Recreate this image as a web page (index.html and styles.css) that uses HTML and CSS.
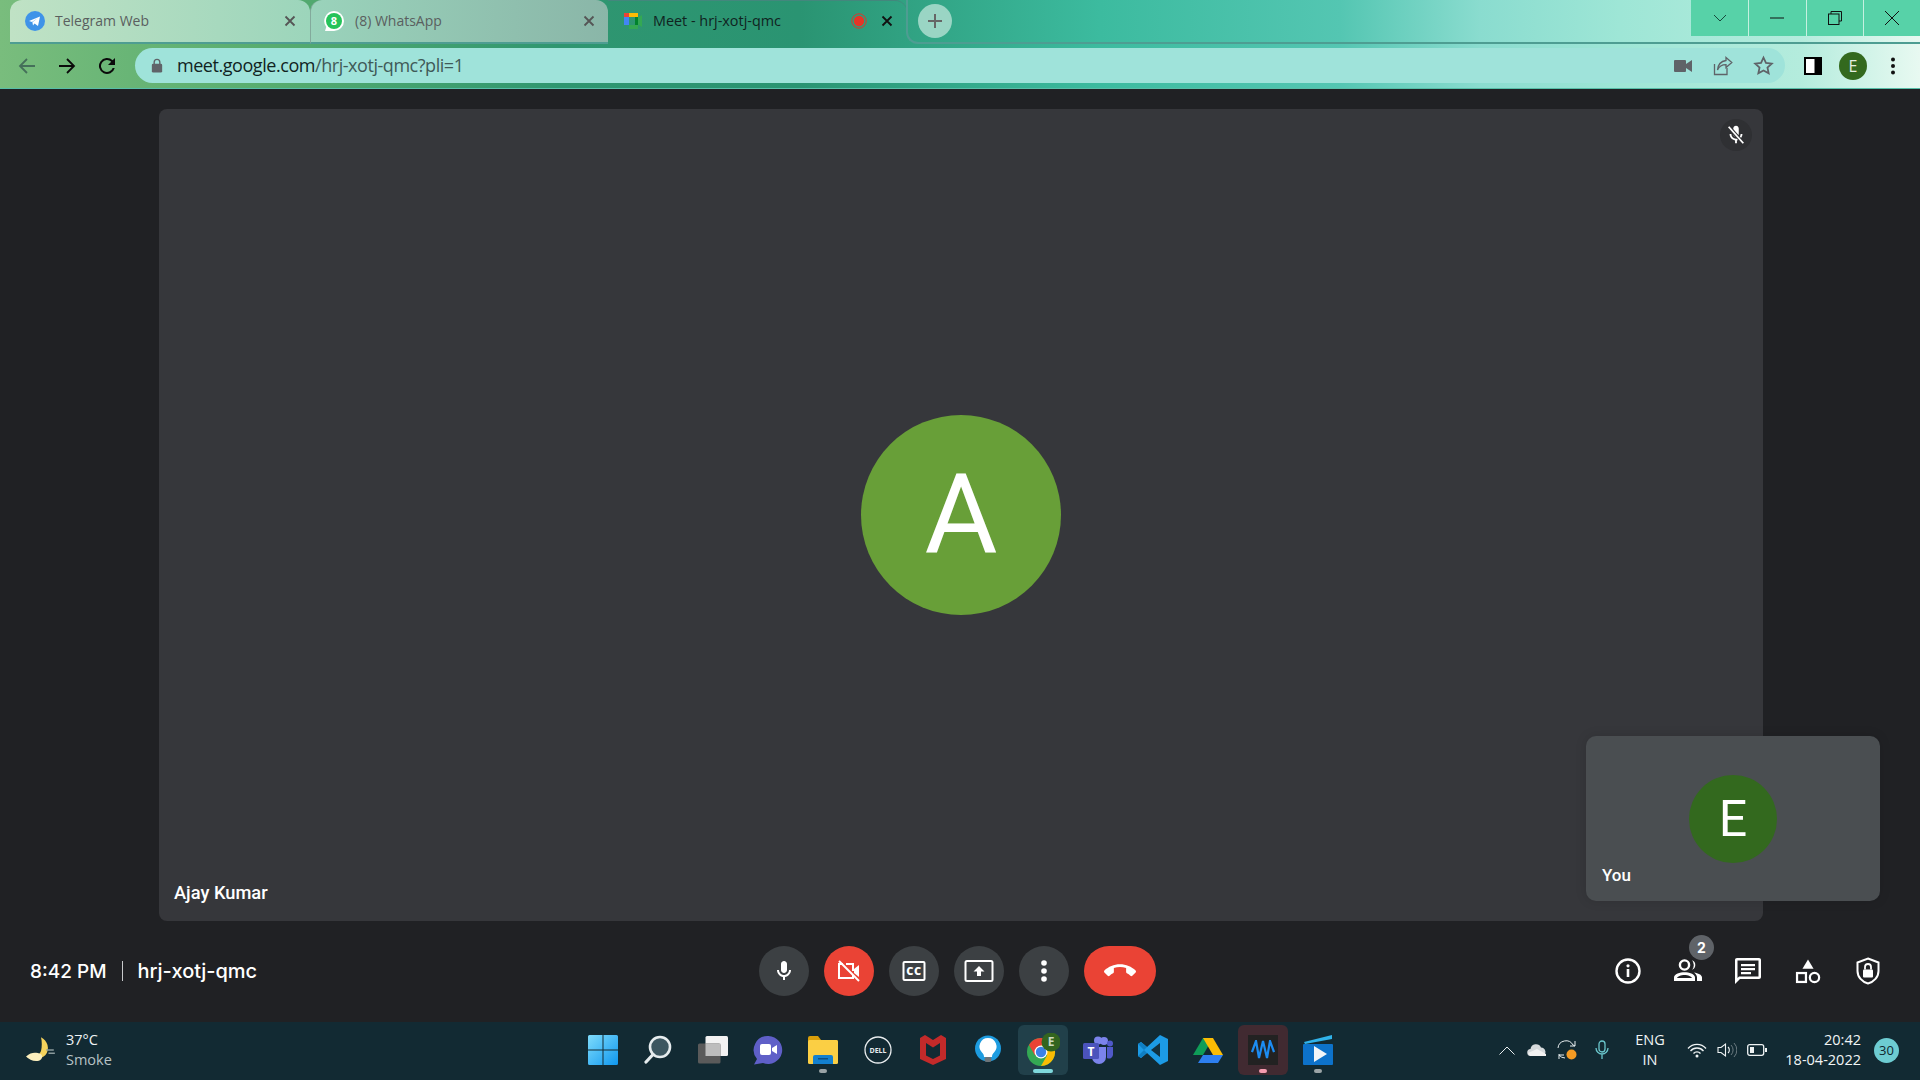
FILE: index.html
```html
<!DOCTYPE html>
<html lang="en">
<head>
<meta charset="utf-8">
<title>Meet - hrj-xotj-qmc</title>
<link rel="stylesheet" href="styles.css">
</head>
<body>
<header class="chrome">
  <div class="tabstrip">
    <div class="tab tab-one">
      <svg class="favicon" viewBox="0 0 20 20"><circle cx="10" cy="10" r="10" fill="#3f93e8"/><path d="M4 10l11-4.5-2 9.5-3.5-2.5-1.5 2-.6-3.3L13 7l-6 4z" fill="#fff"/></svg>
      <span class="tab-title">Telegram Web</span>
      <svg class="tab-x" viewBox="0 0 12 12"><path d="M1.5 1.5l9 9m0-9l-9 9" stroke="#555" stroke-width="1.8"/></svg>
    </div>
    <div class="tab tab-two">
      <svg class="favicon" viewBox="0 0 20 20"><path d="M10 0a10 10 0 0 1 0 20H1l1.3-4A10 10 0 0 1 10 0z" fill="#fff"/><circle cx="10" cy="10" r="8" fill="#25c35a"/><text x="10" y="14" class="wa-count">8</text></svg>
      <span class="tab-title">(8) WhatsApp</span>
      <svg class="tab-x" viewBox="0 0 12 12"><path d="M1.5 1.5l9 9m0-9l-9 9" stroke="#555" stroke-width="1.8"/></svg>
    </div>
    <div class="tab tab-active">
      <svg class="favicon" viewBox="0 0 20 20"><rect x="1" y="6" width="5" height="8" fill="#4285f4"/><rect x="6" y="2" width="9" height="4" fill="#fbbc04"/><rect x="1" y="2" width="5" height="4" fill="#ea4335"/><rect x="6" y="14" width="9" height="4" fill="#34a853"/><path d="M14 7l5-3v12l-5-3z" fill="#34a853"/><rect x="12" y="6" width="3" height="8" fill="#00832d"/></svg>
      <span class="tab-title">Meet - hrj-xotj-qmc</span>
      <svg class="rec" viewBox="0 0 16 16"><circle cx="8" cy="8" r="7.2" fill="none" stroke="#d8392b" stroke-width="1"/><circle cx="8" cy="8" r="5.2" fill="#e53526"/></svg>
      <svg class="tab-x" viewBox="0 0 12 12"><path d="M1.5 1.5l9 9m0-9l-9 9" stroke="#111" stroke-width="1.8"/></svg>
    </div>
    <div class="strip-rest">
      <div class="newtab"><svg viewBox="0 0 16 16" width="16" height="16"><path d="M8 1v14M1 8h14" stroke="#666" stroke-width="2"/></svg></div>
      <div class="winctl">
        <div class="winbtn"><svg viewBox="0 0 14 14" width="14" height="14"><path d="M1 4l6 6 6-6" fill="none" stroke="#17493c" stroke-width="1"/></svg></div>
        <div class="winbtn"><svg viewBox="0 0 14 14" width="14" height="14"><path d="M0 7h14" stroke="#111" stroke-width="1"/></svg></div>
        <div class="winbtn"><svg viewBox="0 0 14 14" width="14" height="14"><path d="M3 3V.5h10.500V10H11" fill="none" stroke="#111"/><rect x=".5" y="3" width="10.500" height="10.500" fill="none" stroke="#111"/></svg></div>
        <div class="winbtn"><svg viewBox="0 0 14 14" width="14" height="14"><path d="M0 0l14 14M14 0L0 14" stroke="#111" stroke-width="1"/></svg></div>
      </div>
    </div>
  </div>
  <div class="toolbar">
    <div class="cell"><svg viewBox="0 0 18 18" width="18" height="18"><path d="M17 9H2M9 2L2 9l7 7" fill="none" stroke="#45705a" stroke-width="1.800"/></svg></div>
    <div class="cell"><svg viewBox="0 0 18 18" width="18" height="18"><path d="M1 9h15M9 2l7 7-7 7" fill="none" stroke="#0b0b0b" stroke-width="1.800"/></svg></div>
    <div class="cell"><svg viewBox="0 0 24 24" width="24" height="24"><path d="M17.650 6.350A8 8 0 1 0 19.730 14h-2.080a6 6 0 1 1-1.410-6.240L13 11h7V4z" fill="#0b0b0b"/></svg></div>
    <div class="address">
      <svg class="lock" viewBox="0 0 12 16" width="12" height="15"><path d="M3 7V4.500a3 3 0 0 1 6 0V7" fill="none" stroke="#5f6368" stroke-width="1.500"/><rect x="0.500" y="6" width="11" height="9.500" rx="1.500" fill="#5f6368"/></svg>
      <span class="url">meet.google.com<span class="url-path">/hrj-xotj-qmc?pli=1</span></span>
      <div class="addr-icons">
        <div class="cell"><svg viewBox="0 0 18 14" width="18" height="14"><rect y="1" width="12" height="12" rx="1" fill="#5f6368"/><path d="M12 5l6-4v12l-6-4z" fill="#5f6368"/></svg></div>
        <div class="cell"><svg viewBox="0 0 20 20" width="20" height="20"><path d="M14 12v6.500H1.500V8" fill="none" stroke="#5f6368" stroke-width="1.300"/><path d="M13 1.500l5.800 5-5.800 5V8.700C8.500 8.700 6 10.500 4.500 14 5 8.500 8 5.200 13 4.500z" fill="none" stroke="#5f6368" stroke-width="1.300"/></svg></div>
        <div class="cell"><svg viewBox="0 0 24 24" width="21" height="21"><path d="M12 3l2.800 6 6.700.8-5 4.500 1.400 6.700L12 17.600 6.100 21l1.400-6.700-5-4.500 6.700-.8z" fill="none" stroke="#5f6368" stroke-width="2"/></svg></div>
      </div>
    </div>
    <div class="tool-right">
      <div class="cell"><svg viewBox="0 0 18 18" width="18" height="18"><rect width="18" height="18" fill="#000"/><rect x="2" y="2" width="8.500" height="14" fill="#fff"/></svg></div>
      <div class="cell"><div class="profile">E</div></div>
      <div class="cell"><svg viewBox="0 0 4 18" width="4" height="18"><circle cx="2" cy="2.500" r="2" fill="#111"/><circle cx="2" cy="9" r="2" fill="#111"/><circle cx="2" cy="15.500" r="2" fill="#111"/></svg></div>
    </div>
  </div>
</header>

<main class="meet">
  <section class="stage">
    <div class="tile">
      <div class="muted"><svg viewBox="0 0 24 24" width="22" height="22"><path d="M12 14c1.660 0 3-1.340 3-3V5c0-1.660-1.340-3-3-3S9 3.340 9 5v6c0 1.660 1.340 3 3 3zm5-3c0 2.760-2.240 5-5 5s-5-2.240-5-5H5c0 3.530 2.610 6.430 6 6.920V21h2v-3.080c3.390-.49 6-3.390 6-6.920h-2z" fill="#fff"/><path d="M4 3l16 18" stroke="#2f3033" stroke-width="4"/><path d="M4 3l16 18" stroke="#fff" stroke-width="2"/></svg></div>
      <div class="avatar-big">A</div>
      <div class="name">Ajay Kumar</div>
    </div>
    <div class="self">
      <div class="avatar-small">E</div>
      <div class="self-name">You</div>
    </div>
  </section>
  <section class="controls">
    <div class="meeting"><span class="clock-time">8:42 PM</span><i class="divider"></i><span>hrj-xotj-qmc</span></div>
    <div class="buttons">
      <div class="round"><svg viewBox="0 0 24 24" width="24" height="24"><path d="M12 14c1.660 0 3-1.340 3-3V5c0-1.660-1.340-3-3-3S9 3.340 9 5v6c0 1.660 1.340 3 3 3zm5-3c0 2.760-2.240 5-5 5s-5-2.240-5-5H5c0 3.530 2.610 6.430 6 6.920V21h2v-3.080c3.390-.49 6-3.390 6-6.920h-2z" fill="#fff"/></svg></div>
      <div class="round red"><svg viewBox="0 0 24 24" width="24" height="24"><path d="M6 5H2v14h14v-3" fill="none" stroke="#fff" stroke-width="2"/><path d="M9 5h7v7" fill="none" stroke="#fff" stroke-width="2"/><path d="M17 10l5-4v12l-5-4z" fill="#fff"/><path d="M2 2l20 20" stroke="#fff" stroke-width="2"/></svg></div>
      <div class="round"><svg viewBox="0 0 24 24" width="24" height="24"><rect x="1.500" y="3" width="21" height="18" rx="1" fill="none" stroke="#fff" stroke-width="2"/><text x="12" y="15.500" class="cc">CC</text></svg></div>
      <div class="round"><svg viewBox="0 0 30 24" width="30" height="24"><rect x="1.500" y="2" width="27" height="20" rx="1.500" fill="none" stroke="#fff" stroke-width="2"/><path d="M15 7l5.500 5.500H17V17h-4v-4.500H9.500z" fill="#fff"/></svg></div>
      <div class="round"><svg viewBox="0 0 6 22" width="6" height="22"><circle cx="3" cy="3" r="2.800" fill="#fff"/><circle cx="3" cy="11" r="2.800" fill="#fff"/><circle cx="3" cy="19" r="2.800" fill="#fff"/></svg></div>
      <div class="round red wide"><svg viewBox="0 0 24 24" width="32" height="32"><path d="M12 9c-1.600 0-3.150.25-4.600.72v3.100c0 .39-.23.74-.56.9-.98.49-1.870 1.120-2.660 1.850-.18.18-.43.28-.7.28-.28 0-.53-.11-.71-.29L.29 13.080c-.18-.17-.29-.42-.29-.7 0-.28.11-.53.29-.71C3.340 8.780 7.460 7 12 7s8.660 1.780 11.710 4.670c.18.18.29.43.29.71 0 .28-.11.53-.29.71l-2.480 2.480c-.18.18-.43.29-.71.29-.27 0-.52-.11-.7-.28-.79-.74-1.690-1.360-2.670-1.850-.33-.16-.56-.5-.56-.9v-3.100C15.150 9.250 13.600 9 12 9z" fill="#fff"/></svg></div>
    </div>
    <div class="side">
      <div class="side-btn"><svg viewBox="0 0 28 28" width="28" height="28"><circle cx="14" cy="14" r="11.500" fill="none" stroke="#fff" stroke-width="2.400"/><rect x="12.700" y="12" width="2.600" height="8" fill="#fff"/><circle cx="14" cy="8.800" r="1.600" fill="#fff"/></svg></div>
      <div class="side-btn"><svg viewBox="0 0 30 26" width="30" height="26"><circle cx="11.500" cy="7" r="4.600" fill="none" stroke="#fff" stroke-width="2.400"/><path d="M19 2.300a5 5 0 0 1 0 9.400 7 7 0 0 0 0-9.400zM1 23v-3.500c0-3.500 6-5.300 10.500-5.300S22 16 22 19.500V23zm3-3h15c-.3-1.500-4-3-7.500-3S4.300 18.500 4 20zM21 14.500c4 .7 8 2.200 8 5V23h-5v-3.500c0-2-1.300-3.800-3-5z" fill="#fff"/></svg><span class="count">2</span></div>
      <div class="side-btn"><svg viewBox="0 0 28 28" width="28" height="28"><path d="M25 1H3C1.800 1 1 1.800 1 3v24l5-5h19c1.200 0 2-.8 2-2V3c0-1.200-.8-2-2-2zm-.5 18.500H5L3.500 21V3.500h21z" fill="#fff"/><path d="M7 7h14v2.200H7zM7 11h14v2.200H7zM7 15h10v2.200H7z" fill="#fff"/></svg></div>
      <div class="side-btn"><svg viewBox="0 0 28 28" width="26" height="26"><path d="M14 1.500L20 11.500H8z" fill="#fff"/><rect x="2.200" y="16.200" width="9.600" height="9.600" fill="none" stroke="#fff" stroke-width="2.400"/><circle cx="21" cy="21" r="5" fill="none" stroke="#fff" stroke-width="2.400"/></svg></div>
      <div class="side-btn"><svg viewBox="0 0 24 28" width="24" height="28"><path d="M12 1.500L22.500 5.500v8.500c0 6-4.500 10.800-10.500 12.500C6 24.800 1.500 20 1.500 14V5.500z" fill="none" stroke="#fff" stroke-width="2"/><rect x="7" y="12.500" width="10" height="8" rx="1" fill="#fff"/><path d="M9 12.500V10a3 3 0 0 1 6 0v2.500" fill="none" stroke="#fff" stroke-width="1.800"/></svg></div>
    </div>
  </section>
</main>

<footer class="taskbar">
  <div class="weather">
    <svg viewBox="0 0 30 30" width="32" height="32"><path d="M15 3c6 3 9 11 4 17-4 4-12 5-18 1 6 1 12 0 14-5 1-4 1-9 0-13z" fill="#f6d35c"/><path d="M1 21c5-4 9-4 14-2 2 2 1 5-2 6-5 1-9-1-12-4z" fill="#fbeebd"/><path d="M20 15h7M22 18h6" stroke="#8a9a9c" stroke-width="1.500"/></svg>
    <div class="weather-text"><div>37°C</div><div class="dim">Smoke</div></div>
  </div>
  <div class="apps">
    <div class="app"><svg viewBox="0 0 30 30" width="30" height="30"><defs><linearGradient id="winfill" x1="0" y1="0" x2="1" y2="1"><stop offset="0" stop-color="#7fdcfb"/><stop offset="1" stop-color="#0f97ef"/></linearGradient></defs><path d="M0 1.500A1.500 1.500 0 0 1 1.500 0h13v14.500H0zM15.500 0h13A1.500 1.500 0 0 1 30 1.500v13H15.500zM0 15.500h14.500V30h-13A1.500 1.500 0 0 1 0 28.500zM15.500 15.500H30v13a1.500 1.500 0 0 1-1.500 1.500h-13z" fill="url(#winfill)"/></svg></div>
    <div class="app"><svg viewBox="0 0 28 30" width="28" height="30"><circle cx="16" cy="12" r="10" fill="#3c5660" stroke="#e6ecee" stroke-width="2.600"/><path d="M9 19.500L2 27" stroke="#e6ecee" stroke-width="3.200" stroke-linecap="round"/></svg></div>
    <div class="app"><svg viewBox="0 0 30 28" width="30" height="28"><rect x="7.500" y="0" width="22.500" height="20" rx="1.500" fill="#f2f2f2"/><rect y="7.500" width="22.500" height="20" rx="1.500" fill="#5a5a5a"/><rect x="7.500" y="7.500" width="15" height="12.500" fill="#bdbdbd"/></svg></div>
    <div class="app"><svg viewBox="0 0 30 30" width="30" height="30"><path d="M15.500 1a14 14 0 1 1-5.500 27L1 29.500 4 24A14 14 0 0 1 15.500 1z" fill="#5f5fc8"/><rect x="7" y="9" width="11" height="11" rx="2" fill="#fff"/><path d="M19 13l5-3v9l-5-3z" fill="#fff"/></svg></div>
    <div class="app"><svg viewBox="0 0 30 28" width="30" height="28"><path d="M0 2a2 2 0 0 1 2-2h8l3 4h15a2 2 0 0 1 2 2v3H0z" fill="#d99f0a"/><rect y="4" width="30" height="24" rx="1.500" fill="#fbcf44"/><path d="M5 28v-7a2 2 0 0 1 2-2h16a2 2 0 0 1 2 2v7z" fill="#1380cf"/><rect x="10" y="22" width="10" height="1.500" fill="#0b4f86"/></svg><i class="pip gray"></i></div>
    <div class="app"><svg viewBox="0 0 28 28" width="28" height="28"><circle cx="14" cy="14" r="13" fill="none" stroke="#e8ecee" stroke-width="1.300"/><text x="14" y="17" class="dell">DELL</text></svg></div>
    <div class="app"><svg viewBox="0 0 26 30" width="26" height="30"><path d="M13 30L0 24V3l5-3 8 5 8-5 5 3v21zM13 24l7-3.500V8l-7 4.500L6 8v12.500z" fill="#c32a2a"/></svg></div>
    <div class="app"><svg viewBox="0 0 28 30" width="28" height="30"><circle cx="14" cy="13.500" r="13" fill="#1d9ce0"/><path d="M14 3a8.500 8.500 0 0 1 6 14.500c-1.300 1.300-2 2.500-2 4.500h-8c0-2-.7-3.200-2-4.500A8.500 8.500 0 0 1 14 3z" fill="#fff"/><rect x="10.500" y="22" width="7" height="5" rx="2" fill="#6d7478"/></svg></div>
    <div class="app active"><svg viewBox="0 0 34 34" width="34" height="34"><circle cx="15" cy="19" r="14" fill="#34a853"/><path d="M15 5a14 14 0 0 1 12.500 7.500H15zM15 5A14 14 0 0 0 3 12l6 10.500 6-10z" fill="#ea4335"/><path d="M27.500 12.500A14 14 0 0 1 15 33l6-10.500-6-10z" fill="#fbbc04"/><circle cx="15" cy="19" r="6.500" fill="#fff"/><circle cx="15" cy="19" r="5.200" fill="#3b82e8"/><circle cx="25" cy="9" r="9.500" fill="#33651f"/><text x="25" y="13" class="chrome-e">E</text></svg><i class="pip teal"></i></div>
    <div class="app"><svg viewBox="0 0 30 28" width="30" height="28"><circle cx="21" cy="5" r="4" fill="#7b83eb"/><circle cx="27" cy="7.500" r="3" fill="#5059c9"/><path d="M9 11h14v10a7 7 0 0 1-14 0z" fill="#7b83eb"/><path d="M24 11h6v8a4 4 0 0 1-6 3z" fill="#5059c9"/><circle cx="15" cy="4.500" r="4" fill="#7b83eb"/><rect y="7" width="16" height="16" rx="1.500" fill="#4b53bc"/><text x="8" y="19.500" class="teams-t">T</text></svg></div>
    <div class="app"><svg viewBox="0 0 30 30" width="30" height="30"><path d="M22 0l8 4v22l-8 4-13-12-6 5-3-2V9l3-2 6 5z" fill="#1c9be6"/><path d="M22 8v14l-9-7z" fill="#123241"/><path d="M9 12l-6-5-3 2 6 6zM9 18l-6 5-3-2 6-6z" fill="#0f7fc4"/></svg></div>
    <div class="app"><svg viewBox="0 0 30 28" width="30" height="28"><path d="M10 1h10L10 18H0z" fill="#0f9d58" transform="translate(0 1)"/><path d="M10 1h10l10 17H20z" fill="#fbbc04" transform="translate(0 1)"/><path d="M5 27l5-8h20l-5 8z" fill="#2d7ff0"/></svg></div>
    <div class="app wave-cell"><div class="wave"><svg viewBox="0 0 24 20" width="24" height="20"><path d="M1 12L5 1l3 17 4-17 4 17 3-17 4 11" fill="none" stroke="#1c8cf2" stroke-width="2.200"/></svg></div><i class="pip pink"></i></div>
    <div class="app"><svg viewBox="0 0 30 30" width="30" height="30"><path d="M1 7l28-7v4L2 9z" fill="#30b3ea"/><rect y="9" width="30" height="21" rx="1" fill="#0d72ca"/><path d="M11 11l13 8-13 8z" fill="#f3f6f8"/></svg><i class="pip gray"></i></div>
  </div>
  <div class="tray">
    <div class="slot w30"><svg viewBox="0 0 16 9" width="16" height="9"><path d="M.5 8.500L8 1l7.500 7.500" fill="none" stroke="#e8eef0" stroke-width="1"/></svg></div>
    <div class="slot w30"><svg viewBox="0 0 20 13" width="20" height="13"><path d="M4 12a3.500 3.500 0 0 1-.5-7A5.500 5.500 0 0 1 14 3.500 4.500 4.500 0 0 1 16 12z" fill="#d6dadc"/><path d="M1 9l9-4 9 5v2H3z" fill="#f2f2f2"/></svg></div>
    <div class="slot w30"><svg viewBox="0 0 22 22" width="22" height="22"><path d="M2 9a8 8 0 0 1 15-3l2 1M19 2v5h-5M3 15v5h0M3 16h5M3 16a8 8 0 0 0 6 3" fill="none" stroke="#e8eef0" stroke-width="1"/><circle cx="15.500" cy="15.500" r="5" fill="#f59b23"/></svg></div>
    <div class="slot w40"><svg viewBox="0 0 14 20" width="14" height="20"><rect x="4" y="1" width="6" height="11" rx="3" fill="none" stroke="#6ac6cc" stroke-width="1.300"/><path d="M1 8a6 6 0 0 0 12 0M7 14v5" fill="none" stroke="#6ac6cc" stroke-width="1.300"/></svg></div>
    <div class="slot w56 lang"><span>ENG</span><span>IN</span></div>
    <div class="slot w38"><svg viewBox="0 0 20 15" width="20" height="15"><path d="M1 5.500a12 12 0 0 1 18 0M3.500 8a8.500 8.500 0 0 1 13 0M6.500 10.500a4.500 4.500 0 0 1 7 0" fill="none" stroke="#eef2f3" stroke-width="1.300"/><circle cx="10" cy="13" r="1.500" fill="#eef2f3"/></svg></div>
    <div class="slot w22"><svg viewBox="0 0 20 16" width="20" height="16"><path d="M1 5.500h3L8.500 2v12L4 10.500H1z" fill="none" stroke="#eef2f3" stroke-width="1.100"/><path d="M11 5a4 4 0 0 1 0 6" fill="none" stroke="#eef2f3" stroke-width="1.100"/><path d="M14 3a7 7 0 0 1 0 10M17 1a10 10 0 0 1 0 14" fill="none" stroke="#6b7a80" stroke-width="1"/></svg></div>
    <div class="slot w38"><svg viewBox="0 0 20 12" width="20" height="12"><rect x=".7" y=".7" width="16" height="10.600" rx="2" fill="none" stroke="#eef2f3" stroke-width="1.300"/><rect x="3" y="3" width="4" height="6" fill="#eef2f3"/><rect x="18" y="4" width="2" height="4" fill="#eef2f3"/></svg></div>
    <div class="clock"><div>20:42</div><div>18-04-2022</div></div>
    <div class="notif">30</div>
  </div>
</footer>
</body>
</html>
```

FILE: styles.css
```css
* { box-sizing: border-box; }
html, body { margin: 0; height: 100%; }
body {
  width: 1920px;
  height: 1080px;
  overflow: hidden;
  display: flex;
  flex-direction: column;
  background: #202124;
  font-family: "Open Sans", "Noto Sans", sans-serif;
}

/* Browser chrome */
.chrome {
  height: 89px;
  flex: none;
  border-bottom: 1px solid #57bea8;
  background: linear-gradient(90deg, #79bd7d 0, #58ad6f 260px, #2f9670 560px, #2a9472 800px, #3cbb9f 1100px, #54c6b2 1340px, #8adccf 1480px, #9ee6d6 1620px, #b4ecdd 1800px, #e8f9f1 1920px);
}
.tabstrip { height: 44px; display: flex; }
.tab {
  width: 299px;
  height: 44px;
  display: flex;
  align-items: center;
  padding: 0 14px 1px 15px;
  font-size: 14px;
  color: #5a5f5f;
  border-bottom: 2px solid #4e9d92;
  flex: none;
}
.tab-one {
  width: 300px;
  margin-left: 10px;
  border-radius: 12px 12px 0 0;
  background: linear-gradient(90deg, #c0e2c5, #9cd5bb);
}
.tab-two {
  width: 298px;
  padding-left: 13px;
  padding-right: 13px;
  border-radius: 12px 12px 0 0;
  border-left: 1px solid #83aa9c;
  background: linear-gradient(90deg, #9ad3bb, #8ab6a8);
}
.tab-two .favicon { margin-right: 11px; }
.tab-active {
  color: #10231f;
  font-size: 14.4px;
  border-bottom: 0;
  border-top: 1px solid #43877d;
  height: 42px;
  padding-bottom: 2px;
  border-radius: 0 12px 0 0;
}
.favicon { width: 20px; height: 20px; flex: none; margin-right: 10px; }
.tab-title { flex: 1; white-space: nowrap; }
.tab-x { width: 12px; height: 12px; flex: none; }
.rec { width: 16px; height: 16px; flex: none; margin-right: 14px; }
.wa-count { font: 700 11px "Open Sans", sans-serif; fill: #fff; text-anchor: middle; }
.strip-rest {
  flex: 1;
  height: 44px;
  margin-left: -1px;
  display: flex;
  align-items: flex-start;
  border-left: 2px solid #4e9d92;
  border-bottom: 2px solid #4e9d92;
  border-radius: 0 0 0 12px;
}
.newtab {
  width: 34px;
  height: 34px;
  margin: 4px 0 0 10px;
  border-radius: 50%;
  background: #9ad5c4;
  display: flex;
  align-items: center;
  justify-content: center;
}
.winctl { margin-left: auto; display: flex; height: 36px; }
.winbtn {
  width: 57.25px;
  height: 36px;
  background: #57d2a8;
  border-left: 1px solid #c6f0e0;
  display: flex;
  align-items: center;
  justify-content: center;
}
.winbtn:first-child { border-left: 0; }

.toolbar { height: 44px; display: flex; align-items: flex-start; padding: 4px 0 0 7px; }
.cell {
  width: 40px;
  height: 35px;
  flex: none;
  display: flex;
  align-items: center;
  justify-content: center;
}
.address {
  width: 1650px;
  height: 35px;
  margin-left: 8px;
  padding: 0 2px 0 14px;
  border-radius: 18px;
  background: #9fe3da;
  display: flex;
  align-items: center;
}
.lock { flex: none; margin: 0 14px 0 2px; }
.url { font-size: 18px; color: #10231f; white-space: nowrap; letter-spacing: -.45px; padding-bottom: 2px; }
.url-path { color: #3f5a58; }
.addr-icons { margin-left: auto; display: flex; }
.tool-right { display: flex; margin-left: 8px; }
.profile {
  width: 28px;
  height: 28px;
  border-radius: 50%;
  background: #33691e;
  color: #e6efe0;
  font-size: 16px;
  text-align: center;
  line-height: 28px;
}

/* Meet */
.meet { flex: 1; display: flex; flex-direction: column; min-height: 0; }
.stage { position: relative; height: 832px; padding: 20px 157px 0 159px; flex: none; }
.tile {
  position: relative;
  height: 812px;
  border-radius: 8px;
  background: #36373b;
  display: flex;
  align-items: center;
  justify-content: center;
}
.muted {
  position: absolute;
  top: 10px;
  right: 11px;
  width: 32px;
  height: 32px;
  border-radius: 50%;
  background: #2f3033;
  display: flex;
  align-items: center;
  justify-content: center;
}
.avatar-big {
  width: 200px;
  height: 200px;
  border-radius: 50%;
  background: #689f38;
  color: #fff;
  font: 400 112px/200px Roboto, sans-serif;
  text-align: center;
}
.name {
  position: absolute;
  left: 15px;
  bottom: 18px;
  color: #fff;
  font: 500 18.300px Roboto, sans-serif;
}
.self {
  position: absolute;
  left: 1586px;
  top: 647px;
  width: 294px;
  height: 165px;
  border-radius: 10px;
  background: #4a4e51;
  box-shadow: 0 0 12px rgba(0,0,0,.12);
  display: flex;
  align-items: center;
  justify-content: center;
}
.avatar-small {
  width: 88px;
  height: 88px;
  border-radius: 50%;
  background: #33691e;
  color: #fff;
  font: 400 50px/88px Roboto, sans-serif;
  text-align: center;
}
.self-name {
  position: absolute;
  left: 16px;
  bottom: 16px;
  color: #fff;
  font: 500 17px Roboto, sans-serif;
}

.controls {
  flex: 1;
  display: grid;
  grid-template-columns: 1fr auto 1fr;
  align-items: center;
  padding-bottom: 1px;
}
.meeting {
  padding-left: 30px;
  display: flex;
  align-items: center;
  color: #fff;
  font: 500 20px Inter, sans-serif;
}
.clock-time { font-size: 19px; }
.divider { width: 1px; height: 20px; background: #c8cacc; margin: 0 15px; }
.buttons { display: flex; gap: 15px; margin-right: 5px; }
.round {
  width: 50px;
  height: 50px;
  border-radius: 50%;
  background: #3c4043;
  display: flex;
  align-items: center;
  justify-content: center;
}
.red { background: #ea4335; }
.wide { width: 72px; border-radius: 25px; }
.cc { font: 800 11px "Open Sans", sans-serif; fill: #fff; text-anchor: middle; letter-spacing: .5px; }
.side { display: flex; justify-content: flex-end; padding-right: 22px; }
.side-btn {
  position: relative;
  width: 60px;
  height: 50px;
  display: flex;
  align-items: center;
  justify-content: center;
}
.count {
  position: absolute;
  top: -11px;
  left: 31px;
  width: 25px;
  height: 25px;
  border-radius: 50%;
  background: #5f6368;
  color: #fff;
  font: 700 14px/25px Inter, sans-serif;
  text-align: center;
}

/* Windows taskbar */
.taskbar {
  height: 58px;
  flex: none;
  display: grid;
  grid-template-columns: 1fr auto 1fr;
  align-items: center;
  padding-bottom: 2px;
  background: #122a33;
  color: #f0f4f5;
  font-size: 14.500px;
  line-height: 20px;
}
.weather { display: flex; align-items: center; padding-left: 25px; gap: 9px; }
.dim { color: #b7c2c5; }
.apps { display: flex; }
.app {
  position: relative;
  width: 55px;
  height: 50px;
  display: flex;
  align-items: center;
  justify-content: center;
}
.app.active::before {
  content: "";
  position: absolute;
  left: 3px;
  right: 2px;
  top: 0;
  bottom: 0;
  border-radius: 6px;
  background: #21404a;
}
.app.active svg { position: relative; }
.wave-cell::before {
  content: "";
  position: absolute;
  left: 3px;
  right: 2px;
  top: 0;
  bottom: 0;
  border-radius: 6px;
  background: #412a31;
}
.wave {
  position: relative;
  width: 30px;
  height: 30px;
  background: #222;
  display: flex;
  align-items: center;
  justify-content: center;
}
.pip {
  position: absolute;
  bottom: 2px;
  left: 50%;
  width: 8px;
  height: 4px;
  margin-left: -4px;
  border-radius: 2px;
}
.gray { background: #9aa3a6; }
.pink { background: #f59cb0; }
.teal { background: #7fd8dc; width: 20px; margin-left: -10px; }
.dell { font: 700 7px "Open Sans", sans-serif; fill: #e8ecee; text-anchor: middle; }
.chrome-e { font: 700 12px "Open Sans", sans-serif; fill: #c9d8bf; text-anchor: middle; }
.teams-t { font: 700 12px "Open Sans", sans-serif; fill: #fff; text-anchor: middle; }
.tray { display: flex; align-items: center; justify-content: flex-end; padding-right: 21px; }
.slot { flex: none; display: flex; align-items: center; justify-content: center; }
.w22 { width: 22px; }
.w30 { width: 30px; }
.w38 { width: 38px; }
.w40 { width: 40px; }
.w56 { width: 56px; }
.lang { flex-direction: column; }
.clock { width: 85px; text-align: right; white-space: nowrap; }
.notif {
  width: 25px;
  height: 25px;
  margin-left: 13px;
  border-radius: 50%;
  background: #6dccd2;
  color: #10262e;
  text-align: center;
  font-size: 13px;
  line-height: 25px;
}
```
